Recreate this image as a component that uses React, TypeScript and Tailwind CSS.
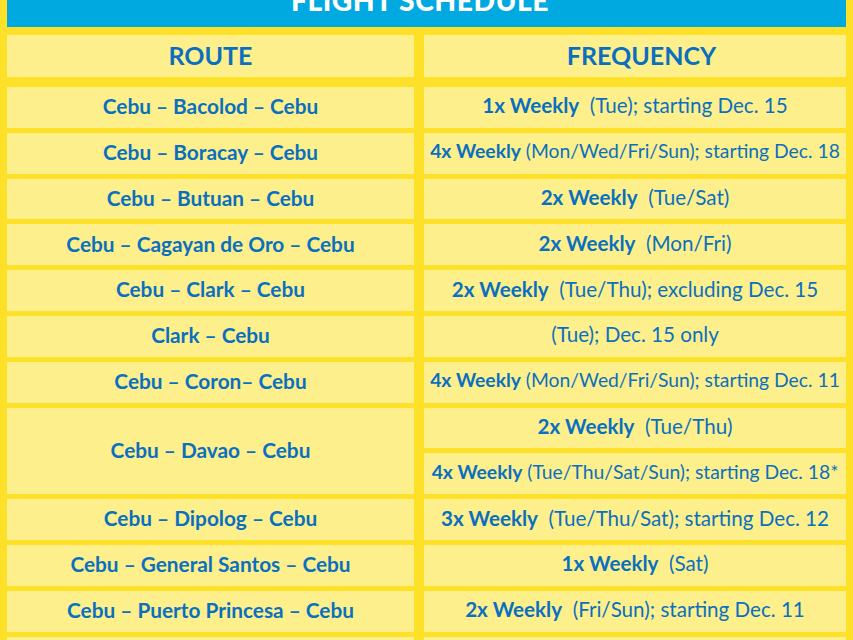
import React from 'react';

type Freq = { bold?: string; rest: string; small?: boolean };

interface ScheduleRow {
  route: string;
  freqs: Freq[];
}

const rows: ScheduleRow[] = [
  { route: 'Cebu – Bacolod – Cebu', freqs: [{ bold: '1x Weekly', rest: '(Tue); starting Dec. 15' }] },
  { route: 'Cebu – Boracay – Cebu', freqs: [{ bold: '4x Weekly', rest: '(Mon/Wed/Fri/Sun); starting Dec. 18', small: true }] },
  { route: 'Cebu – Butuan – Cebu', freqs: [{ bold: '2x Weekly', rest: '(Tue/Sat)' }] },
  { route: 'Cebu – Cagayan de Oro – Cebu', freqs: [{ bold: '2x Weekly', rest: '(Mon/Fri)' }] },
  { route: 'Cebu – Clark – Cebu', freqs: [{ bold: '2x Weekly', rest: '(Tue/Thu); excluding Dec. 15' }] },
  { route: 'Clark – Cebu', freqs: [{ rest: '(Tue); Dec. 15 only' }] },
  { route: 'Cebu – Coron– Cebu', freqs: [{ bold: '4x Weekly', rest: '(Mon/Wed/Fri/Sun); starting Dec. 11', small: true }] },
  {
    route: 'Cebu – Davao – Cebu',
    freqs: [
      { bold: '2x Weekly', rest: '(Tue/Thu)' },
      { bold: '4x Weekly', rest: '(Tue/Thu/Sat/Sun); starting Dec. 18*', small: true },
    ],
  },
  { route: 'Cebu – Dipolog – Cebu', freqs: [{ bold: '3x Weekly', rest: '(Tue/Thu/Sat); starting Dec. 12' }] },
  { route: 'Cebu – General Santos – Cebu', freqs: [{ bold: '1x Weekly', rest: '(Sat)' }] },
  { route: 'Cebu – Puerto Princesa – Cebu', freqs: [{ bold: '2x Weekly', rest: '(Fri/Sun); starting Dec. 11' }] },
  { route: '', freqs: [{ rest: '' }] },
];

function FreqCell({ f }: { f: Freq }) {
  return (
    <div className="flex items-center justify-center bg-[#fcef8c] pb-[3px] whitespace-nowrap">
      <span className={f.small ? 'text-[19.3px]' : 'text-[20.6px]'}>
        {f.bold && <span className="font-bold">{f.bold}</span>}
        {f.bold && (f.small ? ' ' : '\u00a0 ')}
        <span className="font-normal">{f.rest}</span>
      </span>
    </div>
  );
}

export default function App() {
  return (
    <div
      className="h-[640px] w-[853px] overflow-hidden bg-[#fde128] px-[7px] text-[#0b6fc0]"
      style={{ fontFamily: 'Lato, "Open Sans", sans-serif' }}
    >
      {/* Title bar */}
      <div className="h-[27px] overflow-hidden bg-[#00a9df] pr-[13px]">
        <div className="-mt-[15px] text-center text-[28.3px] font-black leading-[30px] tracking-[0.5px] text-white">
          FLIGHT SCHEDULE
        </div>
      </div>

      {/* Column headers */}
      <div className="mt-[8px] grid grid-cols-[407px_422px] gap-x-[10px]">
        <div className="flex h-[42px] items-center justify-center bg-[#fcef8c] text-[25px] font-bold">
          ROUTE
        </div>
        <div className="flex h-[42px] items-center justify-center bg-[#fcef8c] pl-[13px] text-[25px] font-bold">
          FREQUENCY
        </div>
      </div>

      {/* Rows */}
      <div className="mt-[10px] grid auto-rows-[40.8px] grid-cols-[407px_422px] gap-x-[10px] gap-y-[5px]">
        {rows.map((r, i) => (
          <React.Fragment key={i}>
            <div
              className={
                'flex items-center justify-center bg-[#fcef8c] pb-[3px] text-[20.8px] font-bold whitespace-nowrap ' +
                (r.freqs.length > 1 ? 'row-span-2' : '')
              }
            >
              {r.route}
            </div>
            {r.freqs.map((f, j) => (
              <FreqCell key={j} f={f} />
            ))}
          </React.Fragment>
        ))}
      </div>
    </div>
  );
}
